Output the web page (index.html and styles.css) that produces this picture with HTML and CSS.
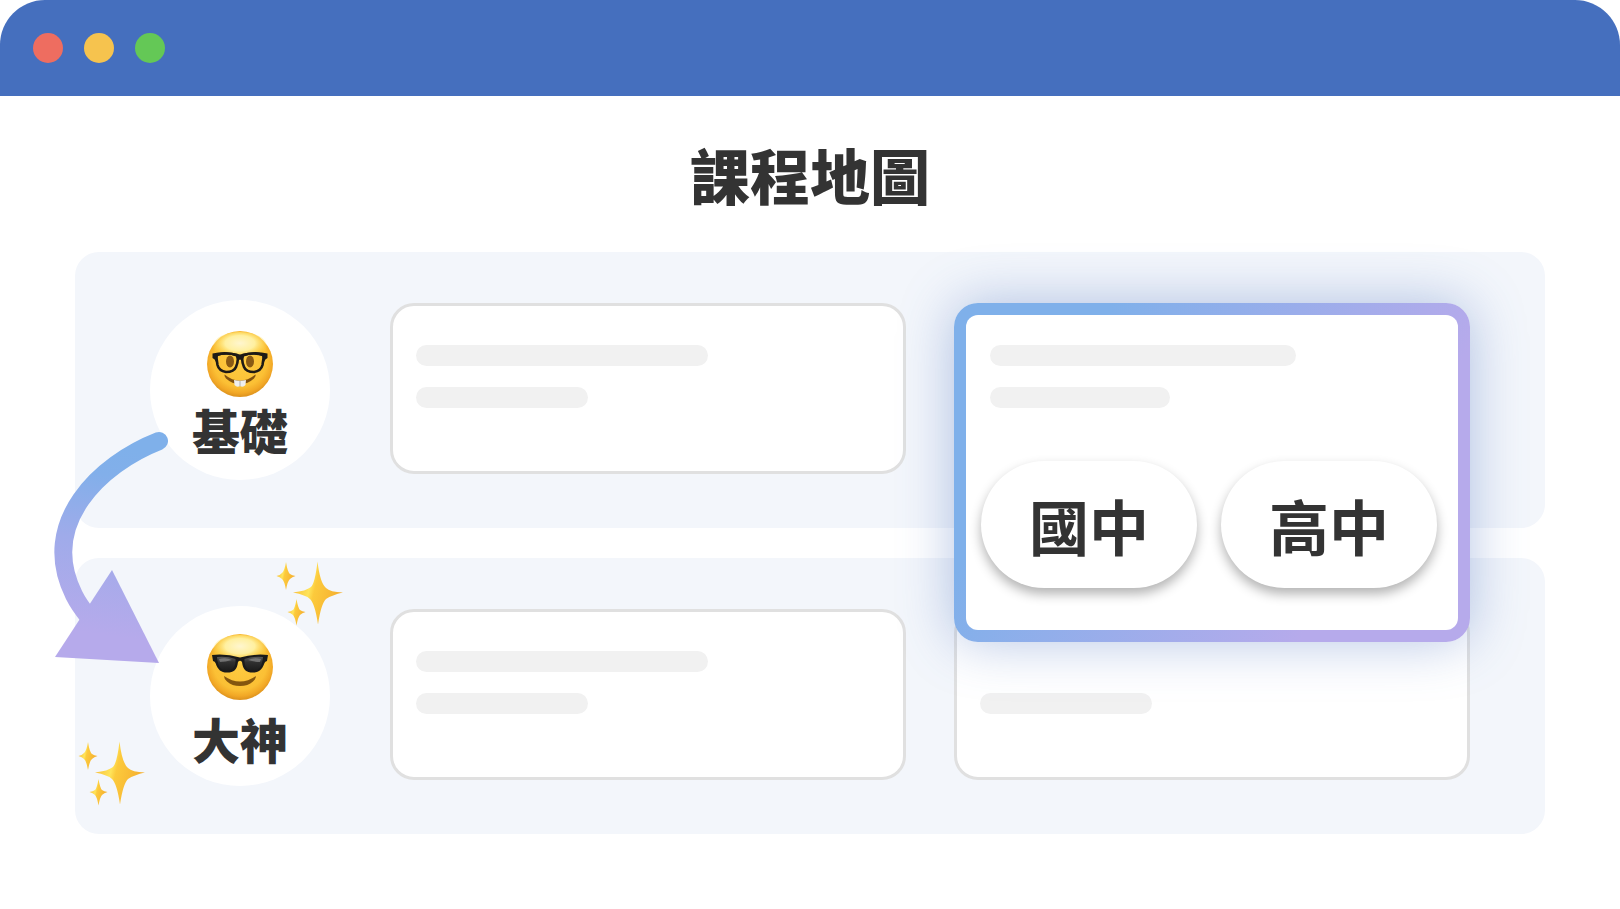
FILE: index.html
```html
<!DOCTYPE html>
<html lang="zh-Hant">
<head>
<meta charset="utf-8">
<title>課程地圖</title>
<link rel="stylesheet" href="styles.css">
</head>
<body>
<svg class="defs" aria-hidden="true">
  <defs>
    <radialGradient id="face" cx="0.5" cy="0.44" r="0.58">
      <stop offset="0" stop-color="#ffcd42"/>
      <stop offset="0.7" stop-color="#fbc035"/>
      <stop offset="0.86" stop-color="#f2a826"/>
      <stop offset="1" stop-color="#d58a1a"/>
    </radialGradient>
    <radialGradient id="shine" cx="0.5" cy="0.4" r="0.55">
      <stop offset="0" stop-color="#fff6cf"/>
      <stop offset="0.5" stop-color="#fff0a0"/>
      <stop offset="1" stop-color="#ffdc50" stop-opacity="0"/>
    </radialGradient>
    <linearGradient id="lens" x1="0" y1="0" x2="0" y2="1">
      <stop offset="0" stop-color="#5a5a5a"/>
      <stop offset="0.4" stop-color="#303030"/>
      <stop offset="1" stop-color="#1c1c1c"/>
    </linearGradient>
    <linearGradient id="spark" x1="0" y1="0" x2="1" y2="0.3">
      <stop offset="0" stop-color="#f5b02e"/>
      <stop offset="0.42" stop-color="#ffe45a"/>
      <stop offset="0.52" stop-color="#fcca3c"/>
      <stop offset="1" stop-color="#f5b030"/>
    </linearGradient>
    <linearGradient id="arrow" gradientUnits="userSpaceOnUse" x1="80" y1="20" x2="55" y2="205">
      <stop offset="0" stop-color="#7fb0ea"/>
      <stop offset="0.15" stop-color="#82afea"/>
      <stop offset="0.5" stop-color="#9fabea"/>
      <stop offset="1" stop-color="#b6aaeb"/>
    </linearGradient>
    <symbol id="sparkles" viewBox="0 0 70 66">
      <path fill="url(#spark)" d="M42.500 0.500 Q45 22 51 27 Q55 31 68 31.500 Q57 34 51 38 Q46 43 43 63.500 Q40 43 35 38 Q31 34 18 31.500 Q31 30 36 26 Q40 22 42.500 0.500Z"/>
      <path fill="url(#spark)" d="M11 1 Q12.500 11 15 13 Q17 14.500 20.500 15 Q17 16 15 18 Q12.500 20 11 29 Q9.500 20 7 18 Q5 16 1.500 15 Q5 14.500 7 12 Q9.500 10 11 1Z"/>
      <path fill="url(#spark)" d="M21.500 38 Q23 47 25 49 Q27 50.500 30.500 51 Q27 52 25 54 Q23 56 21.500 64.500 Q20 56 18 54 Q16 52 12.500 51 Q16 50.500 18 49 Q20 47 21.500 38Z"/>
    </symbol>
  </defs>
</svg>

<div class="window">
  <header class="titlebar">
    <span class="dot dot-close"></span>
    <span class="dot dot-min"></span>
    <span class="dot dot-max"></span>
  </header>

  <main class="content">
    <h1 class="heading">課程地圖</h1>

    <div class="levels">
      <section class="level">
        <div class="badge badge-basic">
          <svg class="emoji" viewBox="0 0 66 66" aria-hidden="true">
            <circle cx="33" cy="33" r="33" fill="url(#face)"/>
            <ellipse cx="33" cy="15" rx="27" ry="14" fill="url(#shine)"/>
            <ellipse cx="23" cy="30.500" rx="4" ry="6" fill="#8a5a14"/>
            <ellipse cx="43" cy="30.500" rx="4" ry="6" fill="#8a5a14"/>
            <path d="M17.500 43.500 Q33 56 48.500 43.500 Q49 45 47 47.500 Q41 53 33 53 Q25 53 19 47.500 Q17 45 17.500 43.500Z" fill="#7f5010"/>
            <path d="M27 49 Q33 50.500 39 49 L38.500 54 Q36 57 33 55 Q30 57 27.500 54Z" fill="#efefef"/>
            <path d="M33 50V55.500" stroke="#b0b0b0"/>
            <path fill="none" stroke="#1e1a16" stroke-width="2.600" stroke-linejoin="round" d="M9 24 Q19 21 30 24 Q32 29 29 36 Q27 41 19 41 Q12 40 10.500 34Z M57 24 Q47 21 36 24 Q34 29 37 36 Q39 41 47 41 Q54 40 55.500 34Z"/>
            <path fill="#1e1a16" d="M5.500 22.500 Q19 19 33 23.500 Q47 19 60.500 22.500 V27 Q58 28 57 31 L55 25 Q46 22 37 25.500 Q36 28 35 30 Q33 27 31 30 Q30 28 29 25.500 Q20 22 11 25 L9 31 Q8 28 5.500 27Z"/>
          </svg>
          <span class="badge-label">基礎</span>
          <svg class="arrow" viewBox="0 0 120 240" aria-hidden="true">
            <path fill="none" stroke="url(#arrow)" stroke-width="18" stroke-linecap="round" d="M109 11 C50 34 -12 93 24 165 Q29 175 38 186"/>
            <path fill="url(#arrow)" d="M62 140 L109 233 L5 227Z"/>
          </svg>
        </div>
        <div class="card">
          <span class="line line-long"></span>
          <span class="line line-short"></span>
        </div>
        <div class="slot">
          <div class="feature">
            <span class="line line-long"></span>
            <span class="line line-short"></span>
            <div class="choices">
              <button class="choice" type="button">國中</button>
              <button class="choice" type="button">高中</button>
            </div>
          </div>
        </div>
      </section>

      <section class="level">
        <div class="badge badge-expert">
          <svg class="emoji" viewBox="0 0 66 66" aria-hidden="true">
            <circle cx="33" cy="33" r="33" fill="url(#face)"/>
            <ellipse cx="33" cy="15" rx="27" ry="14" fill="url(#shine)"/>
            <path d="M17 42 Q33 53 49 42 Q49 45 46 47.500 Q41 52 33 52 Q25 52 20 47.500 Q17 45 17 42Z" fill="#84560f"/>
            <path fill="#1a1a1a" d="M5 21 Q19 19.500 33 23.500 Q47 19.500 61 21 L60 27 Q58 27.500 57.500 29 C55 36 52 38.500 46 38.500 C39 38.500 36 36 35 28 Q33 25.500 31 28 C30 36 27 38.500 20 38.500 C14 38.500 11 36 8.500 29 Q8 27.500 6 27Z"/>
            <path fill="url(#lens)" d="M10 23 Q20 22 28.500 25 C29 32 26 36.500 20 36.500 C13 36.500 11 32 10 23Z M56 23 Q46 22 37.500 25 C37 32 40 36.500 46 36.500 C53 36.500 55 32 56 23Z"/>
            <path fill="#a5a5a5" opacity="0.5" d="M12 25 Q19 23 25 26 Q18 28 13 28Z M41 26 Q47 23 54 25 L53 28 Q47 28 41 26Z"/>
          </svg>
          <span class="badge-label">大神</span>
          <svg class="sparkles sparkles-top" aria-hidden="true"><use href="#sparkles"/></svg>
          <svg class="sparkles sparkles-bottom" aria-hidden="true"><use href="#sparkles"/></svg>
        </div>
        <div class="card">
          <span class="line line-long"></span>
          <span class="line line-short"></span>
        </div>
        <div class="card card-end">
          <span class="line line-short"></span>
        </div>
      </section>
    </div>
  </main>
</div>
</body>
</html>
```

FILE: styles.css
```css
* {
  box-sizing: border-box;
}

body {
  margin: 0;
  background: #ffffff;
  color: #333333;
  font-family: "Noto Sans CJK TC", "Noto Sans", sans-serif;
}

.defs {
  position: absolute;
  width: 0;
  height: 0;
}

.window {
  min-height: 100vh;
  border-radius: 45px;
  overflow: hidden;
  background: #ffffff;
}

.titlebar {
  display: flex;
  align-items: center;
  gap: 21px;
  height: 96px;
  padding: 0 33px;
  background: #456fbe;
}

.dot {
  width: 30px;
  height: 30px;
  border-radius: 50%;
}

.dot-close { background: #ee6d60; }
.dot-min { background: #f6c34e; }
.dot-max { background: #64c856; }

.content {
  padding: 36px 75px 75px;
}

.heading {
  margin: 0 0 36px;
  font-size: 60px;
  line-height: 84px;
  font-weight: 900;
  text-align: center;
}

.levels {
  display: flex;
  flex-direction: column;
  gap: 30px;
}

.level {
  display: grid;
  grid-template-columns: 192px 1fr 1fr;
  column-gap: 48px;
  align-items: start;
  padding: 48px 75px;
  border-radius: 24px;
  background: #f3f6fb;
}

.badge {
  position: relative;
  display: flex;
  flex-direction: column;
  align-items: center;
  width: 180px;
  height: 180px;
  border-radius: 50%;
  background: #ffffff;
}

.badge-basic {
  padding-top: 31px;
}

.badge-expert {
  gap: 6px;
  padding-top: 28px;
}

.emoji {
  width: 66px;
  height: 66px;
}

.badge-label {
  font-size: 48px;
  line-height: 64px;
  font-weight: 900;
}

.arrow {
  position: absolute;
  z-index: 1;
  left: -100px;
  top: 130px;
  width: 120px;
  height: 240px;
}

.sparkles {
  position: absolute;
  width: 70px;
  height: 66px;
}

.sparkles-top {
  left: 125px;
  top: -45px;
}

.sparkles-bottom {
  left: -73px;
  top: 135px;
}

.card,
.feature {
  display: flex;
  flex-direction: column;
  gap: 21px;
  border-radius: 24px;
  background: #ffffff;
}

.card {
  height: 171px;
  margin-top: 3px;
  padding: 39px 23px;
  border: 3px solid #e0e0e0;
}

.card-end {
  padding-top: 81px;
}

.line {
  height: 21px;
  border-radius: 11px;
  background: #f1f1f1;
}

.line-long { width: 292px; }
.line-short { width: 172px; }

.slot {
  position: relative;
  margin-top: 3px;
}

.feature {
  position: absolute;
  z-index: 2;
  top: 0;
  left: 0;
  right: 0;
  padding: 30px 15px 42px;
  border: 12px solid transparent;
  background:
    linear-gradient(#ffffff, #ffffff) padding-box,
    linear-gradient(120deg, #7fb0ea 22%, #b6aaeb 76%) border-box;
  box-shadow: 0 0 54px rgba(69, 111, 190, 0.4);
}

.feature .line {
  margin-left: 9px;
}

.feature .line-long { width: 306px; }
.feature .line-short { width: 180px; }

.choices {
  display: grid;
  grid-template-columns: 1fr 1fr;
  gap: 24px;
  margin-top: 32px;
  padding-right: 6px;
}

.choice {
  height: 127px;
  padding: 0;
  border: 0;
  border-radius: 64px;
  background: #ffffff;
  box-shadow: 0 6px 12px rgba(0, 0, 0, 0.3);
  color: inherit;
  font: 700 60px/84px "Noto Sans CJK TC", "Noto Sans", sans-serif;
}
```
